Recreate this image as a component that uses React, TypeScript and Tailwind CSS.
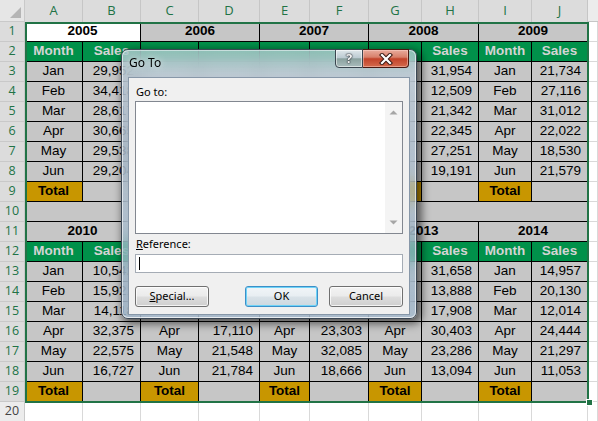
import React from "react";

const MONTHS = ["Jan", "Feb", "Mar", "Apr", "May", "Jun"];

const topYears = ["2005", "2006", "2007", "2008", "2009"];
const topSales: number[][] = [
  [29952, 34418, 28617, 30665, 29538, 29204],
  [24218, 18936, 26504, 33110, 20487, 31769],
  [27340, 22915, 19873, 25061, 30248, 16592],
  [31954, 12509, 21342, 22345, 27251, 19191],
  [21734, 27116, 31012, 22022, 18530, 21579],
];

const bottomYears = ["2010", "2011", "2012", "2013", "2014"];
const bottomSales: number[][] = [
  [10542, 15921, 14118, 32375, 22575, 16727],
  [26931, 19402, 28745, 17110, 21548, 21784],
  [15286, 30914, 24067, 23303, 32085, 18666],
  [31658, 13888, 17908, 30403, 23286, 13094],
  [14957, 20130, 12014, 24444, 21297, 11053],
];

const fmt = (n: number) => n.toLocaleString("en-US");

const COLS = ["A", "B", "C", "D", "E", "F", "G", "H", "I", "J"];

const cellFont = "font-['Liberation_Sans',Arial,sans-serif] text-[13.5px] text-black";
const hdrFont = "font-['Open_Sans',sans-serif] text-[12.5px]";

const yearCls = `col-span-2 bg-[#c6c6c6] border-r border-b border-black flex items-center justify-center font-bold ${cellFont}`;
const yearActiveCls = `col-span-2 bg-white border-r border-b border-black flex items-center justify-center font-bold ${cellFont}`;
const headCls = `bg-[#00914a] border-r border-b border-black flex items-center justify-center font-bold font-['Liberation_Sans',Arial,sans-serif] text-[13.5px] text-[#d4d4d4]`;
const monthCls = `bg-[#c6c6c6] border-r border-b border-black flex items-center justify-center ${cellFont}`;
const numCls = `bg-[#c6c6c6] border-r border-b border-black flex items-center justify-end pr-[6px] ${cellFont}`;
const totalCls = `bg-[#c89600] border-r border-b border-black flex items-center justify-center font-bold ${cellFont}`;
const blankCls = "bg-[#c6c6c6] border-r border-b border-black";
const gapCls = "col-span-10 bg-[#c6c6c6] border-b border-black";
const whiteCls = "bg-white border-r border-b border-[#d9d9d9]";

// The Go To window sits over columns C..G for rows 2-15; labels there are never painted.
const underWindow = (row: number, col: number) => row >= 2 && row <= 15 && col >= 2 && col <= 6;

function RowHead({ n, active = true }: { n: number; active?: boolean }) {
  return (
    <div
      className={`border-r border-b border-[#c9c9c9] flex items-center justify-center ${hdrFont} ${
        active ? "bg-[#dcdcdc] text-[#217346]" : "bg-[#ececec] text-[#444444]"
      }`}
    >
      {n}
    </div>
  );
}

function YearRow({ n, years, firstActive }: { n: number; years: string[]; firstActive?: boolean }) {
  return (
    <>
      <RowHead n={n} />
      {years.map((y, i) => (
        <div key={y} className={i === 0 && firstActive ? yearActiveCls : yearCls}>
          {underWindow(n, i * 2) && underWindow(n, i * 2 + 1) ? null : y}
        </div>
      ))}
      <div className={whiteCls} />
    </>
  );
}

function HeadRow({ n }: { n: number }) {
  return (
    <>
      <RowHead n={n} />
      {Array.from({ length: 5 }).map((_, i) => (
        <React.Fragment key={i}>
          <div className={headCls}>{underWindow(n, i * 2) ? null : "Month"}</div>
          <div className={headCls}>{underWindow(n, i * 2 + 1) ? null : "Sales"}</div>
        </React.Fragment>
      ))}
      <div className={whiteCls} />
    </>
  );
}

function DataRows({ start, sales }: { start: number; sales: number[][] }) {
  return (
    <>
      {MONTHS.map((m, r) => {
        const row = start + r;
        return (
          <React.Fragment key={m}>
            <RowHead n={row} />
            {sales.map((col, i) => (
              <React.Fragment key={i}>
                <div className={monthCls}>{underWindow(row, i * 2) ? null : m}</div>
                <div className={numCls}>{underWindow(row, i * 2 + 1) ? null : fmt(col[r])}</div>
              </React.Fragment>
            ))}
            <div className={whiteCls} />
          </React.Fragment>
        );
      })}
    </>
  );
}

function TotalRow({ n }: { n: number }) {
  return (
    <>
      <RowHead n={n} />
      {Array.from({ length: 5 }).map((_, i) => (
        <React.Fragment key={i}>
          <div className={totalCls}>{underWindow(n, i * 2) ? null : "Total"}</div>
          <div className={blankCls} />
        </React.Fragment>
      ))}
      <div className={whiteCls} />
    </>
  );
}

function Arrow({ up }: { up?: boolean }) {
  return (
    <svg width="9" height="5" viewBox="0 0 9 5">
      <polygon points={up ? "0.5,4.5 4.5,0.5 8.5,4.5" : "0.5,0.5 8.5,0.5 4.5,4.5"} fill="#a6a6a6" />
    </svg>
  );
}

function GoToDialog() {
  const btn =
    "h-[21px] w-[74px] rounded-[3px] border border-[#707070] bg-[linear-gradient(180deg,#f3f3f3_0%,#ebebeb_48%,#dddddd_52%,#cfcfcf_100%)] shadow-[inset_0_0_0_1px_rgba(255,255,255,0.75)] flex items-center justify-center text-[11px] text-black";
  return (
    <div className="absolute left-[121px] top-[49px] w-[296px] h-[270px] rounded-[7px] border border-[#3b4754] shadow-[3px_3px_9px_2px_rgba(0,0,0,0.55)] bg-[rgba(165,188,210,0.6)] backdrop-blur-[9px] font-['Noto_Sans',sans-serif]">
      <div className="absolute inset-0 rounded-[6px] border border-white/60 bg-[linear-gradient(180deg,rgba(255,255,255,0.25)_0%,rgba(255,255,255,0.05)_35%,rgba(150,178,205,0.25)_100%)]" />
      <div className="absolute left-[7px] top-[5px] text-[12px] leading-[16px] text-black [text-shadow:0_0_6px_rgba(255,255,255,0.9)]">
        Go To
      </div>

      {/* caption buttons */}
      <div className="absolute top-[-1px] right-[7px] flex h-[19px]">
        <div className="w-[28px] h-full rounded-bl-[4px] border border-[#3a454f] bg-[linear-gradient(180deg,#dfe7ea_0%,#bccbd2_45%,#8aa19f_52%,#a9bcbc_100%)] shadow-[inset_0_0_0_1px_rgba(255,255,255,0.55)] flex items-center justify-center">
          <span className="text-[13px] font-bold leading-none text-[#f4f4f4] [text-shadow:0_0_1px_#2c3238,0_0_1px_#2c3238,0_0_2px_#2c3238]">?</span>
        </div>
        <div className="w-[46px] h-full rounded-br-[4px] border border-l-0 border-[#4a1810] bg-[linear-gradient(180deg,#e8ab9c_0%,#d8806b_42%,#c2432a_52%,#d46a4c_100%)] shadow-[inset_0_0_0_1px_rgba(255,220,210,0.45)] flex items-center justify-center">
          <svg width="14" height="12" viewBox="0 0 14 12">
            <path d="M3 2 L11 10 M11 2 L3 10" stroke="#3a1a14" strokeWidth="4.2" strokeLinecap="square" />
            <path d="M3 2 L11 10 M11 2 L3 10" stroke="#ffffff" strokeWidth="2.2" strokeLinecap="square" />
          </svg>
        </div>
      </div>

      {/* client area */}
      <div className="absolute left-[6px] top-[27px] w-[282px] h-[238px] border border-[#8797a8] bg-[#f0f0f0] flex flex-col px-[6px] pt-[6px]">
        <div className="h-[17px] flex items-center pl-[1px] text-[11px] text-black">Go to:</div>
        <div className="h-[133px] bg-white border border-[#828790] flex">
          <div className="ml-auto w-[17px] h-full bg-[#f4f4f4] flex flex-col justify-between items-center pt-[8px] pb-[8px]">
            <Arrow up />
            <Arrow />
          </div>
        </div>
        <div className="h-[20px] flex items-center pl-[1px] text-[11px] text-black">
          <span>
            <span className="underline">R</span>eference:
          </span>
        </div>
        <div className="h-[19px] bg-white border border-[#a5acb5] flex items-center pl-[3px]">
          <div className="w-px h-[13px] bg-black" />
        </div>
        <div className="mt-[13px] flex">
          <div className={btn}>
            <span>
              <span className="underline">S</span>pecial...
            </span>
          </div>
          <div className="ml-auto flex gap-[11px]">
            <div className="h-[21px] w-[73px] rounded-[3px] border border-[#3c8fc8] bg-[linear-gradient(180deg,#f1f5f8_0%,#e8eef2_48%,#d9e2e8_52%,#cdd8df_100%)] shadow-[inset_0_0_0_1px_#6fd3f7] flex items-center justify-center text-[11px] text-black">
              OK
            </div>
            <div className={btn}>Cancel</div>
          </div>
        </div>
      </div>
    </div>
  );
}

export default function App() {
  return (
    <div className="relative w-[598px] h-[421px] overflow-hidden bg-white">
      <div className="grid grid-cols-[25px_58px_58px_58px_61px_50px_59px_53px_57px_53px_56px_10px] grid-rows-[22px_repeat(20,20px)]">
        {/* column headers */}
        <div className="bg-[#e6e6e6] border-r border-b border-[#c9c9c9] relative">
          <svg className="absolute left-0 top-0" width="25" height="22" viewBox="0 0 25 22">
            <polygon points="21,7 21,18 10,18" fill="#b5b5b5" />
          </svg>
        </div>
        {COLS.map((c) => (
          <div
            key={c}
            className={`bg-[#dcdcdc] border-r border-[#c6c6c6] flex items-center justify-center text-[#217346] font-['Open_Sans',sans-serif] text-[13px]`}
          >
            {c}
          </div>
        ))}
        <div className="bg-[#ececec] border-b border-[#c6c6c6]" />

        <YearRow n={1} years={topYears} firstActive />
        <HeadRow n={2} />
        <DataRows start={3} sales={topSales} />
        <TotalRow n={9} />

        <RowHead n={10} />
        <div className={gapCls} />
        <div className={whiteCls} />

        <YearRow n={11} years={bottomYears} />
        <HeadRow n={12} />
        <DataRows start={13} sales={bottomSales} />
        <TotalRow n={19} />

        <RowHead n={20} active={false} />
        {COLS.map((c) => (
          <div key={c} className={whiteCls} />
        ))}
        <div className={whiteCls} />
      </div>

      {/* selection outline and fill handle */}
      <div className="absolute left-[25px] top-[22px] w-[564px] h-[381px] border-2 border-[#217346] pointer-events-none" />
      <div className="absolute left-[586px] top-[399px] w-[7px] h-[7px] bg-[#217346] border border-white" />

      <GoToDialog />
    </div>
  );
}
